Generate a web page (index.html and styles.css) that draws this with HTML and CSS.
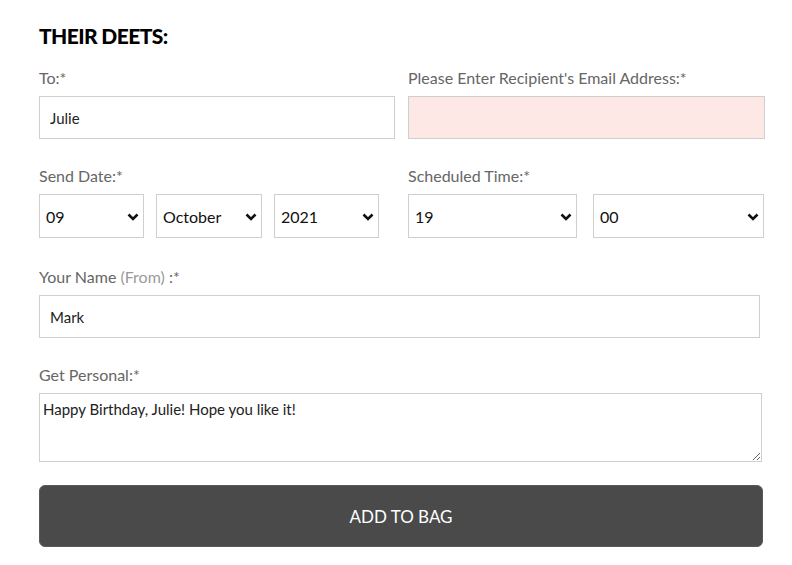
FILE: index.html
```html
<!DOCTYPE html>
<html lang="en">
<head>
<meta charset="utf-8">
<title>Their Deets</title>
<link rel="stylesheet" href="styles.css">
</head>
<body>
<form class="deets">
  <h2 class="title">THEIR DEETS:</h2>

  <div class="row two">
    <div class="field">
      <label class="lbl">To:*</label>
      <input class="txt" type="text" value="Julie">
    </div>
    <div class="field">
      <label class="lbl">Please Enter Recipient's Email Address:*</label>
      <input class="txt invalid" type="text" value="">
    </div>
  </div>

  <div class="row two sel-row">
    <div class="field">
      <label class="lbl">Send Date:*</label>
      <div class="selects date">
        <div class="sel w-day"><select><option>09</option></select><svg class="chev" viewBox="0 0 12 8"><path d="M1.5 1.5 6 6 10.5 1.5"/></svg></div>
        <div class="sel w-month"><select><option>October</option></select><svg class="chev" viewBox="0 0 12 8"><path d="M1.5 1.5 6 6 10.5 1.5"/></svg></div>
        <div class="sel w-year"><select><option>2021</option></select><svg class="chev" viewBox="0 0 12 8"><path d="M1.5 1.5 6 6 10.5 1.5"/></svg></div>
      </div>
    </div>
    <div class="field">
      <label class="lbl">Scheduled Time:*</label>
      <div class="selects time">
        <div class="sel w-hour"><select><option>19</option></select><svg class="chev" viewBox="0 0 12 8"><path d="M1.5 1.5 6 6 10.5 1.5"/></svg></div>
        <div class="sel w-min"><select><option>00</option></select><svg class="chev" viewBox="0 0 12 8"><path d="M1.5 1.5 6 6 10.5 1.5"/></svg></div>
      </div>
    </div>
  </div>

  <div class="row">
    <div class="field">
      <label class="lbl">Your Name <span class="muted">(From)</span> :*</label>
      <input class="txt name" type="text" value="Mark">
    </div>
  </div>

  <div class="row last">
    <div class="field">
      <label class="lbl">Get Personal:*</label>
      <textarea class="msg">Happy Birthday, Julie! Hope you like it!</textarea>
    </div>
  </div>

  <button class="add" type="button">ADD TO BAG</button>
</form>
</body>
</html>
```

FILE: styles.css
```css
html, body {
  margin: 0;
  padding: 0;
  background: #ffffff;
}

body {
  font-family: "Lato", "Liberation Sans", sans-serif;
  color: #333333;
}

.deets {
  padding: 23px 0 0 39px;
  width: 726px;
}

.title {
  margin: 0 0 19px 0;
  font-size: 21px;
  line-height: 26px;
  font-weight: 900;
  color: #000000;
  letter-spacing: -0.6px;
}

.row {
  display: flex;
  gap: 13px;
  margin-bottom: 27px;
}

.row.sel-row {
  margin-bottom: 29px;
}

.row.last {
  margin-bottom: 23px;
}

.row.two .field {
  width: 356px;
}

.row.two .field + .field {
  width: 357px;
}

.field {
  display: flex;
  flex-direction: column;
}

.lbl {
  display: block;
  font-size: 16px;
  line-height: 20px;
  color: #666666;
  margin-bottom: 8px;
}

.muted {
  color: #9a9a9a;
}

.txt {
  box-sizing: border-box;
  height: 43px;
  border: 1px solid #cfcfcf;
  border-radius: 0;
  padding: 0 10px;
  font-family: inherit;
  font-size: 15px;
  color: #222222;
  background: #ffffff;
  outline: none;
}

.txt.invalid {
  background: #fde8e6;
}

.txt.name {
  width: 721px;
  height: 43px;
}

.selects {
  display: flex;
}

.selects.date {
  gap: 12px;
}

.selects.time {
  gap: 16px;
}

.sel {
  position: relative;
  height: 44px;
}

.w-day { width: 105px; }
.w-month { width: 106px; }
.w-year { width: 105px; }
.w-hour { width: 169px; }
.w-min { width: 171px; }

.sel select {
  -webkit-appearance: none;
  appearance: none;
  box-sizing: border-box;
  width: 100%;
  height: 100%;
  border: 1px solid #cfcfcf;
  border-radius: 0;
  background: #ffffff;
  padding: 0 20px 0 6px;
  font-family: inherit;
  font-size: 16px;
  color: #111111;
  outline: none;
}

.chev {
  position: absolute;
  right: 5px;
  top: 19px;
  width: 12px;
  height: 8px;
  pointer-events: none;
  fill: none;
  stroke: #111111;
  stroke-width: 2.6;
  stroke-linecap: butt;
  stroke-linejoin: miter;
}

.msg {
  box-sizing: border-box;
  width: 723px;
  height: 69px;
  border: 1px solid #cfcfcf;
  border-radius: 0;
  padding: 6px 3px;
  font-family: inherit;
  font-size: 15px;
  line-height: 18px;
  color: #222222;
  outline: none;
}

.add {
  display: block;
  box-sizing: border-box;
  width: 724px;
  height: 62px;
  border: 1px solid #5a5a5a;
  border-radius: 6px;
  background: #4a4a4a;
  color: #ffffff;
  font-family: inherit;
  font-size: 17px;
  cursor: pointer;
}
```
